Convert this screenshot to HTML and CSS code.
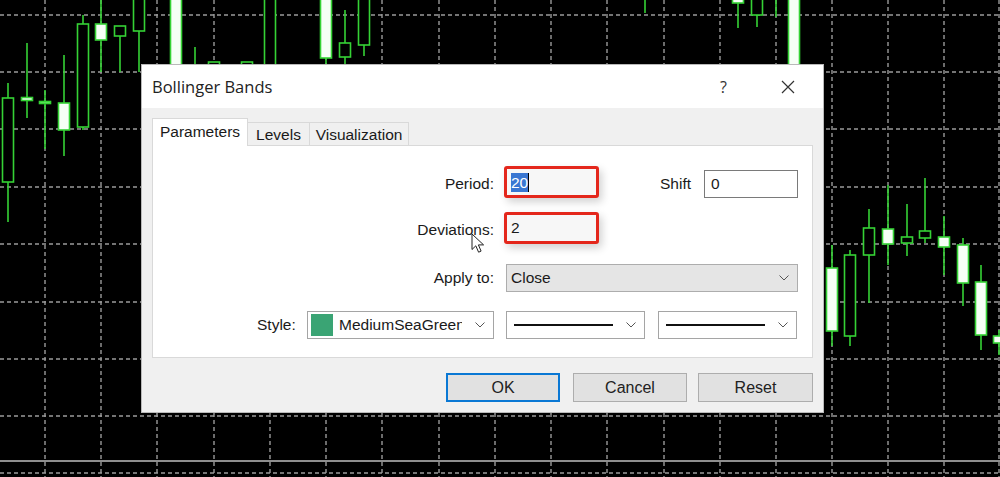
FILE: index.html
```html
<!DOCTYPE html>
<html lang="en">
<head>
    <meta charset="UTF-8">
    <title>Bollinger Bands</title>
    <link rel="stylesheet" href="styles.css">
</head>
<body>
<div class="screen">
    <svg class="chart" width="1000" height="477" viewBox="0 0 1000 477">
        <path class="grid" d="M45 0V477M101 0V477M157 0V477M214 0V477M270 0V477M326 0V477M382 0V477M439 0V477M495 0V477M551 0V477M607 0V477M664 0V477M720 0V477M776 0V477M832 0V477M888 0V477M944 0V477M999 0V477
            M0 15H1000M0 72H1000M0 129H1000M0 187H1000M0 244H1000M0 302H1000M0 359H1000M0 416H1000M0 473H1000"/>
        <line class="level" x1="0" y1="461" x2="1000" y2="461"/>
        <g class="candles">
            <line x1="8" y1="83" x2="8" y2="222"/><rect class="bear" x="2.5" y="98" width="11" height="84"/>
            <line x1="27" y1="43" x2="27" y2="118"/><rect class="bull" x="21.5" y="97.5" width="11" height="3"/>
            <line x1="45" y1="90" x2="45" y2="149"/><rect class="doji" x="39.5" y="101.5" width="11" height="2"/>
            <line x1="64" y1="55" x2="64" y2="156"/><rect class="bull" x="58.5" y="103" width="11" height="27"/>
            <line x1="83" y1="15" x2="83" y2="130"/><rect class="bear" x="77.5" y="24" width="11" height="103"/>
            <line x1="101" y1="0" x2="101" y2="72"/><rect class="bull" x="95.5" y="24" width="11" height="16"/>
            <line x1="120" y1="26" x2="120" y2="72"/><rect class="bear" x="114.5" y="26" width="11" height="10"/>
            <line x1="139" y1="0" x2="139" y2="72"/><rect class="bear" x="133.5" y="-2" width="11" height="33"/>
            <rect class="bull" x="170.5" y="-2" width="11" height="70"/>
            <line x1="195" y1="47" x2="195" y2="70"/>
            <rect class="bear" x="208.5" y="62" width="11" height="10"/>
            <rect class="bear" x="241.5" y="62" width="11" height="10"/>
            <rect class="bear" x="264.5" y="-2" width="11" height="72"/>
            <line x1="326" y1="0" x2="326" y2="66"/><rect class="bull" x="320.5" y="-2" width="11" height="60"/>
            <line x1="345" y1="10" x2="345" y2="66"/><rect class="bear" x="339.5" y="43" width="11" height="14"/>
            <line x1="364" y1="0" x2="364" y2="56"/><rect class="bear" x="358.5" y="-2" width="11" height="47"/>
            <line x1="645" y1="0" x2="645" y2="13"/>
            <line x1="738" y1="0" x2="738" y2="28"/><rect class="bull" x="732.5" y="-2" width="11" height="5"/>
            <line x1="757" y1="0" x2="757" y2="27"/><rect class="bear" x="751.5" y="-2" width="11" height="17"/>
            <line x1="776" y1="0" x2="776" y2="17"/>
            <rect class="bull" x="788.5" y="-2" width="11" height="70"/>
            <line x1="832" y1="245" x2="832" y2="346"/><rect class="bull" x="826.5" y="268" width="11" height="63"/>
            <line x1="850" y1="250" x2="850" y2="346"/><rect class="bear" x="844.5" y="255" width="11" height="81"/>
            <line x1="869" y1="209" x2="869" y2="303"/><rect class="bear" x="863.5" y="228" width="11" height="27"/>
            <line x1="888" y1="185" x2="888" y2="265"/><rect class="bull" x="882.5" y="229" width="11" height="15"/>
            <line x1="907" y1="204" x2="907" y2="256"/><rect class="bear" x="901.5" y="237" width="11" height="6"/>
            <line x1="925" y1="178" x2="925" y2="243"/><rect class="bear" x="919.5" y="231" width="11" height="7"/>
            <line x1="944" y1="216" x2="944" y2="275"/><rect class="bull" x="938.5" y="237" width="11" height="10"/>
            <line x1="963" y1="238" x2="963" y2="306"/><rect class="bull" x="957.5" y="245" width="11" height="38"/>
            <line x1="981" y1="265" x2="981" y2="350"/><rect class="bull" x="975.5" y="282" width="11" height="53"/>
            <line x1="999" y1="330" x2="999" y2="355"/><rect class="bull" x="993.5" y="336" width="11" height="7"/>
        </g>
    </svg>

    <div class="dialog">
        <div class="title-bar">
            <span class="title">Bollinger Bands</span>
            <span class="help">?</span>
            <svg class="close" width="14" height="14" viewBox="0 0 14 14">
                <path d="M1 1L13 13M13 1L1 13"/>
            </svg>
        </div>
        <div class="dialog-body">
            <div class="tabs">
                <div class="tab tab-params active">Parameters</div>
                <div class="tab tab-levels">Levels</div>
                <div class="tab tab-vis">Visualization</div>
            </div>
            <div class="panel">
                <div class="row row-period">
                    <span class="label">Period:</span>
                    <div class="field marked"><span class="selected">20</span><span class="caret"></span></div>
                    <span class="label-shift">Shift</span>
                    <div class="field shift">0</div>
                </div>
                <div class="row row-dev">
                    <span class="label">Deviations:</span>
                    <div class="field marked">2</div>
                </div>
                <div class="row row-apply">
                    <span class="label label-apply">Apply to:</span>
                    <div class="select gray apply">
                        <span class="value">Close</span>
                        <svg class="chevron" width="10" height="6" viewBox="0 0 10 6"><path d="M0.5 0.5L5 5L9.5 0.5"/></svg>
                    </div>
                </div>
                <div class="row row-style">
                    <span class="label-style">Style:</span>
                    <div class="select color-select">
                        <span class="swatch"></span>
                        <span class="color-name">MediumSeaGreen</span>
                        <svg class="chevron" width="10" height="6" viewBox="0 0 10 6"><path d="M0.5 0.5L5 5L9.5 0.5"/></svg>
                    </div>
                    <div class="select line-select">
                        <span class="line-sample"></span>
                        <svg class="chevron" width="10" height="6" viewBox="0 0 10 6"><path d="M0.5 0.5L5 5L9.5 0.5"/></svg>
                    </div>
                    <div class="select line-select last">
                        <span class="line-sample"></span>
                        <svg class="chevron" width="10" height="6" viewBox="0 0 10 6"><path d="M0.5 0.5L5 5L9.5 0.5"/></svg>
                    </div>
                </div>
            </div>
            <div class="buttons">
                <button class="btn default">OK</button>
                <button class="btn btn-cancel">Cancel</button>
                <button class="btn btn-reset">Reset</button>
            </div>
        </div>
    </div>

    <svg class="pointer" width="14" height="21" viewBox="0 0 14 21">
        <path d="M1 1V16.5L4.8 12.8L7.6 19.2L10.1 18.1L7.4 11.9H12.6Z"/>
    </svg>
</div>
</body>
</html>
```

FILE: styles.css
```css
body {
    margin: 0;
    padding: 0;
    background-color: black;
}
.screen {
    position: relative;
    width: 1000px;
    height: 477px;
    overflow: hidden;
    background-color: black;
}
.chart {
    display: block;
}
.grid {
    fill: none;
    stroke: #9a9a9a;
    stroke-width: 1.4;
    stroke-dasharray: 4 3;
}
.level {
    stroke: #8e8e8e;
    stroke-width: 2;
}
.candles line {
    stroke: #35d235;
    stroke-width: 1.6;
}
.candles rect {
    stroke: #35d235;
    stroke-width: 1.6;
}
.candles .bull {
    fill: #f6fff6;
}
.candles .bear {
    fill: black;
}
.candles .doji {
    fill: #8df08d;
}

/* dialog */
.dialog {
    position: absolute; /* sits over the chart */
    left: 141px;
    top: 64px;
    width: 683px;
    height: 349px;
    display: flex;
    flex-direction: column;
    background-color: #f0f0f0;
    border: 1px solid #b9b9b9;
    box-sizing: border-box;
    font-family: "Liberation Sans", Arial, sans-serif;
    font-size: 15.5px;
    color: #1a1a1a;
}
.title-bar {
    height: 43px;
    display: flex;
    align-items: center;
    padding-left: 10px;
    background-color: white;
}
.title {
    flex: 1;
    font-family: "Open Sans", sans-serif;
    font-size: 16.5px;
    color: #222;
}
.help {
    font-family: "Open Sans", sans-serif;
    font-size: 16px;
    color: #333;
    margin-right: 54px;
}
.close {
    margin-right: 28px;
}
.close path {
    stroke: #333;
    stroke-width: 1.2;
    fill: none;
}
.dialog-body {
    flex: 1;
    padding: 10px 10px 0 10px;
}
.tabs {
    display: flex;
    align-items: flex-end;
    height: 27px;
}
.tab {
    height: 23px;
    line-height: 23px;
    text-align: center;
    border: 1px solid #d9d9d9;
    border-bottom: none;
    box-sizing: border-box;
    background-color: #f0f0f0;
}
.tab-params {
    width: 96px;
}
.tab-levels {
    width: 63px;
    margin-left: -1px;
}
.tab-vis {
    width: 100px;
    margin-left: -1px;
}
.tab.active {
    height: 28px;
    line-height: 26px;
    margin-bottom: -1px;
    background-color: white;
    position: relative;
    z-index: 1;
}
.panel {
    height: 213px;
    background-color: white;
    border: 1px solid #d9d9d9;
    box-sizing: border-box;
}
.row {
    display: flex;
    align-items: center;
}
.row-period {
    margin-top: 20px;
    height: 32px;
}
.row-dev {
    margin-top: 14px;
    height: 32px;
}
.row-apply {
    margin-top: 20px;
    height: 28px;
}
.row-style {
    margin-top: 19px;
    height: 28px;
    padding-left: 104px;
}
.label {
    width: 341px;
    text-align: right;
    margin-right: 10px;
    padding-top: 3px;
}
.label-apply {
    margin-right: 12px;
    padding-top: 0;
}
.field {
    display: flex;
    align-items: center;
    box-sizing: border-box;
}
.field.marked {
    width: 95px;
    height: 32px;
    padding-left: 4px;
    border: 3px solid #e4271c;
    border-radius: 3px;
    background-color: #f7f7f7;
    box-shadow: 3px 4px 9px rgba(0, 0, 0, 0.18);
}
.selected {
    background-color: #3a77d2;
    color: white;
    line-height: 19px;
}
.caret {
    width: 1px;
    height: 19px;
    background-color: black;
}
.label-shift {
    margin-left: 61px;
    width: 32px;
    margin-right: 12px;
    padding-top: 3px;
}
.field.shift {
    width: 94px;
    height: 28px;
    margin-top: 4px;
    padding-left: 6px;
    border: 1px solid #7a7a7a;
    background-color: white;
}
.select {
    display: flex;
    align-items: center;
    height: 28px;
    border: 1px solid #a5a5a5;
    box-sizing: border-box;
    background-color: white;
}
.select.gray {
    background-color: #e5e5e5;
    border-color: #adadad;
}
.apply {
    width: 292px;
    padding-left: 4px;
}
.value {
    flex: 1;
}
.chevron {
    margin-right: 8px;
}
.chevron path {
    fill: none;
    stroke: #555;
    stroke-width: 1;
}
.label-style {
    width: 50px;
}
.color-select {
    width: 187px;
    padding-left: 3px;
}
.swatch {
    width: 22px;
    height: 22px;
    background-color: #3aa474;
    margin-right: 6px;
}
.color-name {
    width: 123px;
    overflow: hidden;
    white-space: nowrap;
    flex: none;
    margin-right: auto;
}
.line-select {
    width: 139px;
    margin-left: 12px;
    padding-left: 7px;
}
.line-select.last {
    margin-left: 13px;
}
.line-sample {
    width: 99px;
    height: 1.5px;
    background-color: #111;
    margin-right: auto;
}
.buttons {
    display: flex;
    justify-content: flex-end;
    margin-top: 15px;
}
.btn {
    width: 114px;
    height: 29px;
    font-family: "Liberation Sans", Arial, sans-serif;
    font-size: 16px;
    color: #222;
    background-color: #e1e1e1;
    border: 1px solid #adadad;
    padding: 0;
}
.btn.default {
    border: 2px solid #0a78d4;
}
.btn-cancel {
    margin-left: 13px;
}
.btn-reset {
    width: 115px;
    margin-left: 11px;
}

/* mouse pointer over the form */
.pointer {
    position: absolute;
    left: 471px;
    top: 233px;
}
.pointer path {
    fill: white;
    stroke: #222;
    stroke-width: 1;
}
```
